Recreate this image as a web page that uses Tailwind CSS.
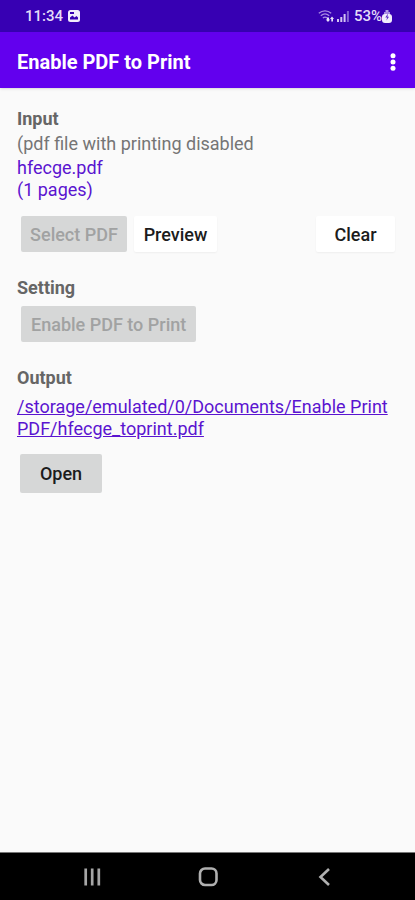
<!DOCTYPE html>
<html lang="en">
<head>
<meta charset="utf-8">
<meta name="viewport" content="width=device-width, initial-scale=1">
<title>Enable PDF to Print</title>
<script src="https://cdn.jsdelivr.net/npm/@tailwindcss/browser@4"></script>
</head>
<body class="flex min-h-screen flex-col bg-[#fafafa] font-['Roboto',sans-serif] text-[18px] leading-[22px] text-[#757575]">
  <div class="flex h-8 items-center justify-between bg-[#3700b3] pr-[23px] pl-[25px] text-[15px] font-medium text-[#e4dcf8]">
    <div class="flex items-center gap-[5px]">
      <span>11:34</span>
      <svg class="size-3" viewBox="0 0 12 12" aria-hidden="true"><rect width="12" height="12" rx="2.500" fill="#f1ecfc"/><path d="M2 9.500V7.500l2.500-2 2 2L8.500 6l1.500 1.500v2z" fill="#3700b3"/><path d="M2 2h4v2H2z" fill="#3700b3"/></svg>
    </div>
    <div class="flex items-center">
      <svg class="mr-[3px] h-3 w-4" viewBox="0 0 16 12" fill="none" stroke="#a88be2" stroke-width="1.300" aria-hidden="true"><path d="M.8 3.300C4.500.1 9.500.1 13.200 3.300M2.800 5.700c2.600-2.200 5.800-2.200 8.400 0M4.900 8c1.300-1.100 2.900-1.100 4.200 0"/><path d="M9 7.500v2H7.700L10 12l2.200-2.500H11v-2zM13.300 11.500V9H12l2-2.500L16 9h-1v2.500z" fill="#e9e2fa" stroke="none"/></svg>
      <svg class="mr-[5px] h-3 w-3" viewBox="0 0 12 12" aria-hidden="true"><path d="M0 9h2v3H0zM3.300 7h2v5h-2zM6.600 4h2v8h-2z" fill="#d3c4f2"/><path d="M9.900 1h2v11h-2z" fill="#8562d4"/></svg>
      <span>53%</span>
      <svg class="h-[13px] w-[10px]" viewBox="0 0 10 13" aria-hidden="true"><path d="M3.500 0h3v2h-3z" fill="#b59de8"/><path d="M2 2h6v3H2z" fill="#a88be2"/><rect x="0" y="4" width="10" height="9" rx="3" fill="#f1ecfc"/><path d="M6 3.500 3.300 7.500h1.800L4.400 10.500 7 6.800H5.400z" fill="#5a2bc4"/></svg>
    </div>
  </div>
  <header class="flex h-14 items-center justify-between bg-[#6200ee] px-[17px] pt-[3px] text-white shadow-sm">
    <h1 class="text-[20px] leading-6 font-bold">Enable PDF to Print</h1>
    <button type="button" aria-label="More options" class="flex w-[10px] justify-center">
      <svg class="h-[18px] w-[6px]" viewBox="0 0 6 18" fill="#fff" aria-hidden="true"><circle cx="3" cy="2.800" r="2.500"/><circle cx="3" cy="9" r="2.500"/><circle cx="3" cy="15.200" r="2.500"/></svg>
    </button>
  </header>
  <main class="flex flex-1 flex-col px-[17px] pt-5">
    <section>
      <h2 class="font-bold text-[#666]">Input</h2>
      <p class="mt-[3px]">(pdf file with printing disabled</p>
      <p class="mt-[2px] text-[#5a14d0]">hfecge.pdf<br>(1 pages)</p>
      <div class="mt-[15px] flex pr-[3px] pl-1 font-medium">
        <button type="button" disabled class="h-9 w-[106px] rounded-xs bg-[#d6d7d7] pt-[2px] text-[#a1a2a2]">Select PDF</button>
        <button type="button" class="ml-[7px] h-9 w-[83px] rounded-xs bg-white pt-[2px] text-[#1c1c1c] shadow-xs">Preview</button>
        <button type="button" class="ml-auto h-9 w-[79px] rounded-xs bg-white pt-[2px] text-[#1c1c1c] shadow-xs">Clear</button>
      </div>
    </section>
    <section class="mt-[25px]">
      <h2 class="font-bold text-[#666]">Setting</h2>
      <div class="mt-[7px] flex pl-1 font-medium">
        <button type="button" disabled class="h-9 rounded-xs bg-[#d6d7d7] px-[10px] pt-[2px] text-[#a1a2a2]">Enable PDF to Print</button>
      </div>
    </section>
    <section class="mt-[25px]">
      <h2 class="font-bold text-[#666]">Output</h2>
      <p class="mt-[7px]"><a href="#" class="text-[#5a14d0] underline">/storage/emulated/0/Documents/Enable Print PDF/hfecge_toprint.pdf</a></p>
      <div class="mt-[14px] flex pl-[3px] font-medium">
        <button type="button" class="h-[39px] w-[82px] rounded-xs bg-[#d6d7d7] text-[#1c1c1c]">Open</button>
      </div>
    </section>
  </main>
  <nav class="flex h-12 items-center justify-center gap-[96px] border-t border-[#777] bg-black" aria-label="System navigation">
    <button type="button" aria-label="Recent apps"><svg class="size-5" viewBox="0 0 20 20" stroke="#a6a6a6" stroke-width="2.700" aria-hidden="true"><path d="M3.700 1.500v17M10.200 1.500v17M16.800 1.500v17"/></svg></button>
    <button type="button" aria-label="Home"><svg class="size-5" viewBox="0 0 20 20" fill="none" stroke="#b0b0b0" stroke-width="2.600" aria-hidden="true"><rect x="2" y="1.500" width="16.500" height="16.500" rx="5"/></svg></button>
    <button type="button" aria-label="Back"><svg class="size-5" viewBox="0 0 20 20" fill="none" stroke="#b0b0b0" stroke-width="2.600" aria-hidden="true"><path d="M15 2 6.500 10l8.500 8"/></svg></button>
  </nav>
</body>
</html>
